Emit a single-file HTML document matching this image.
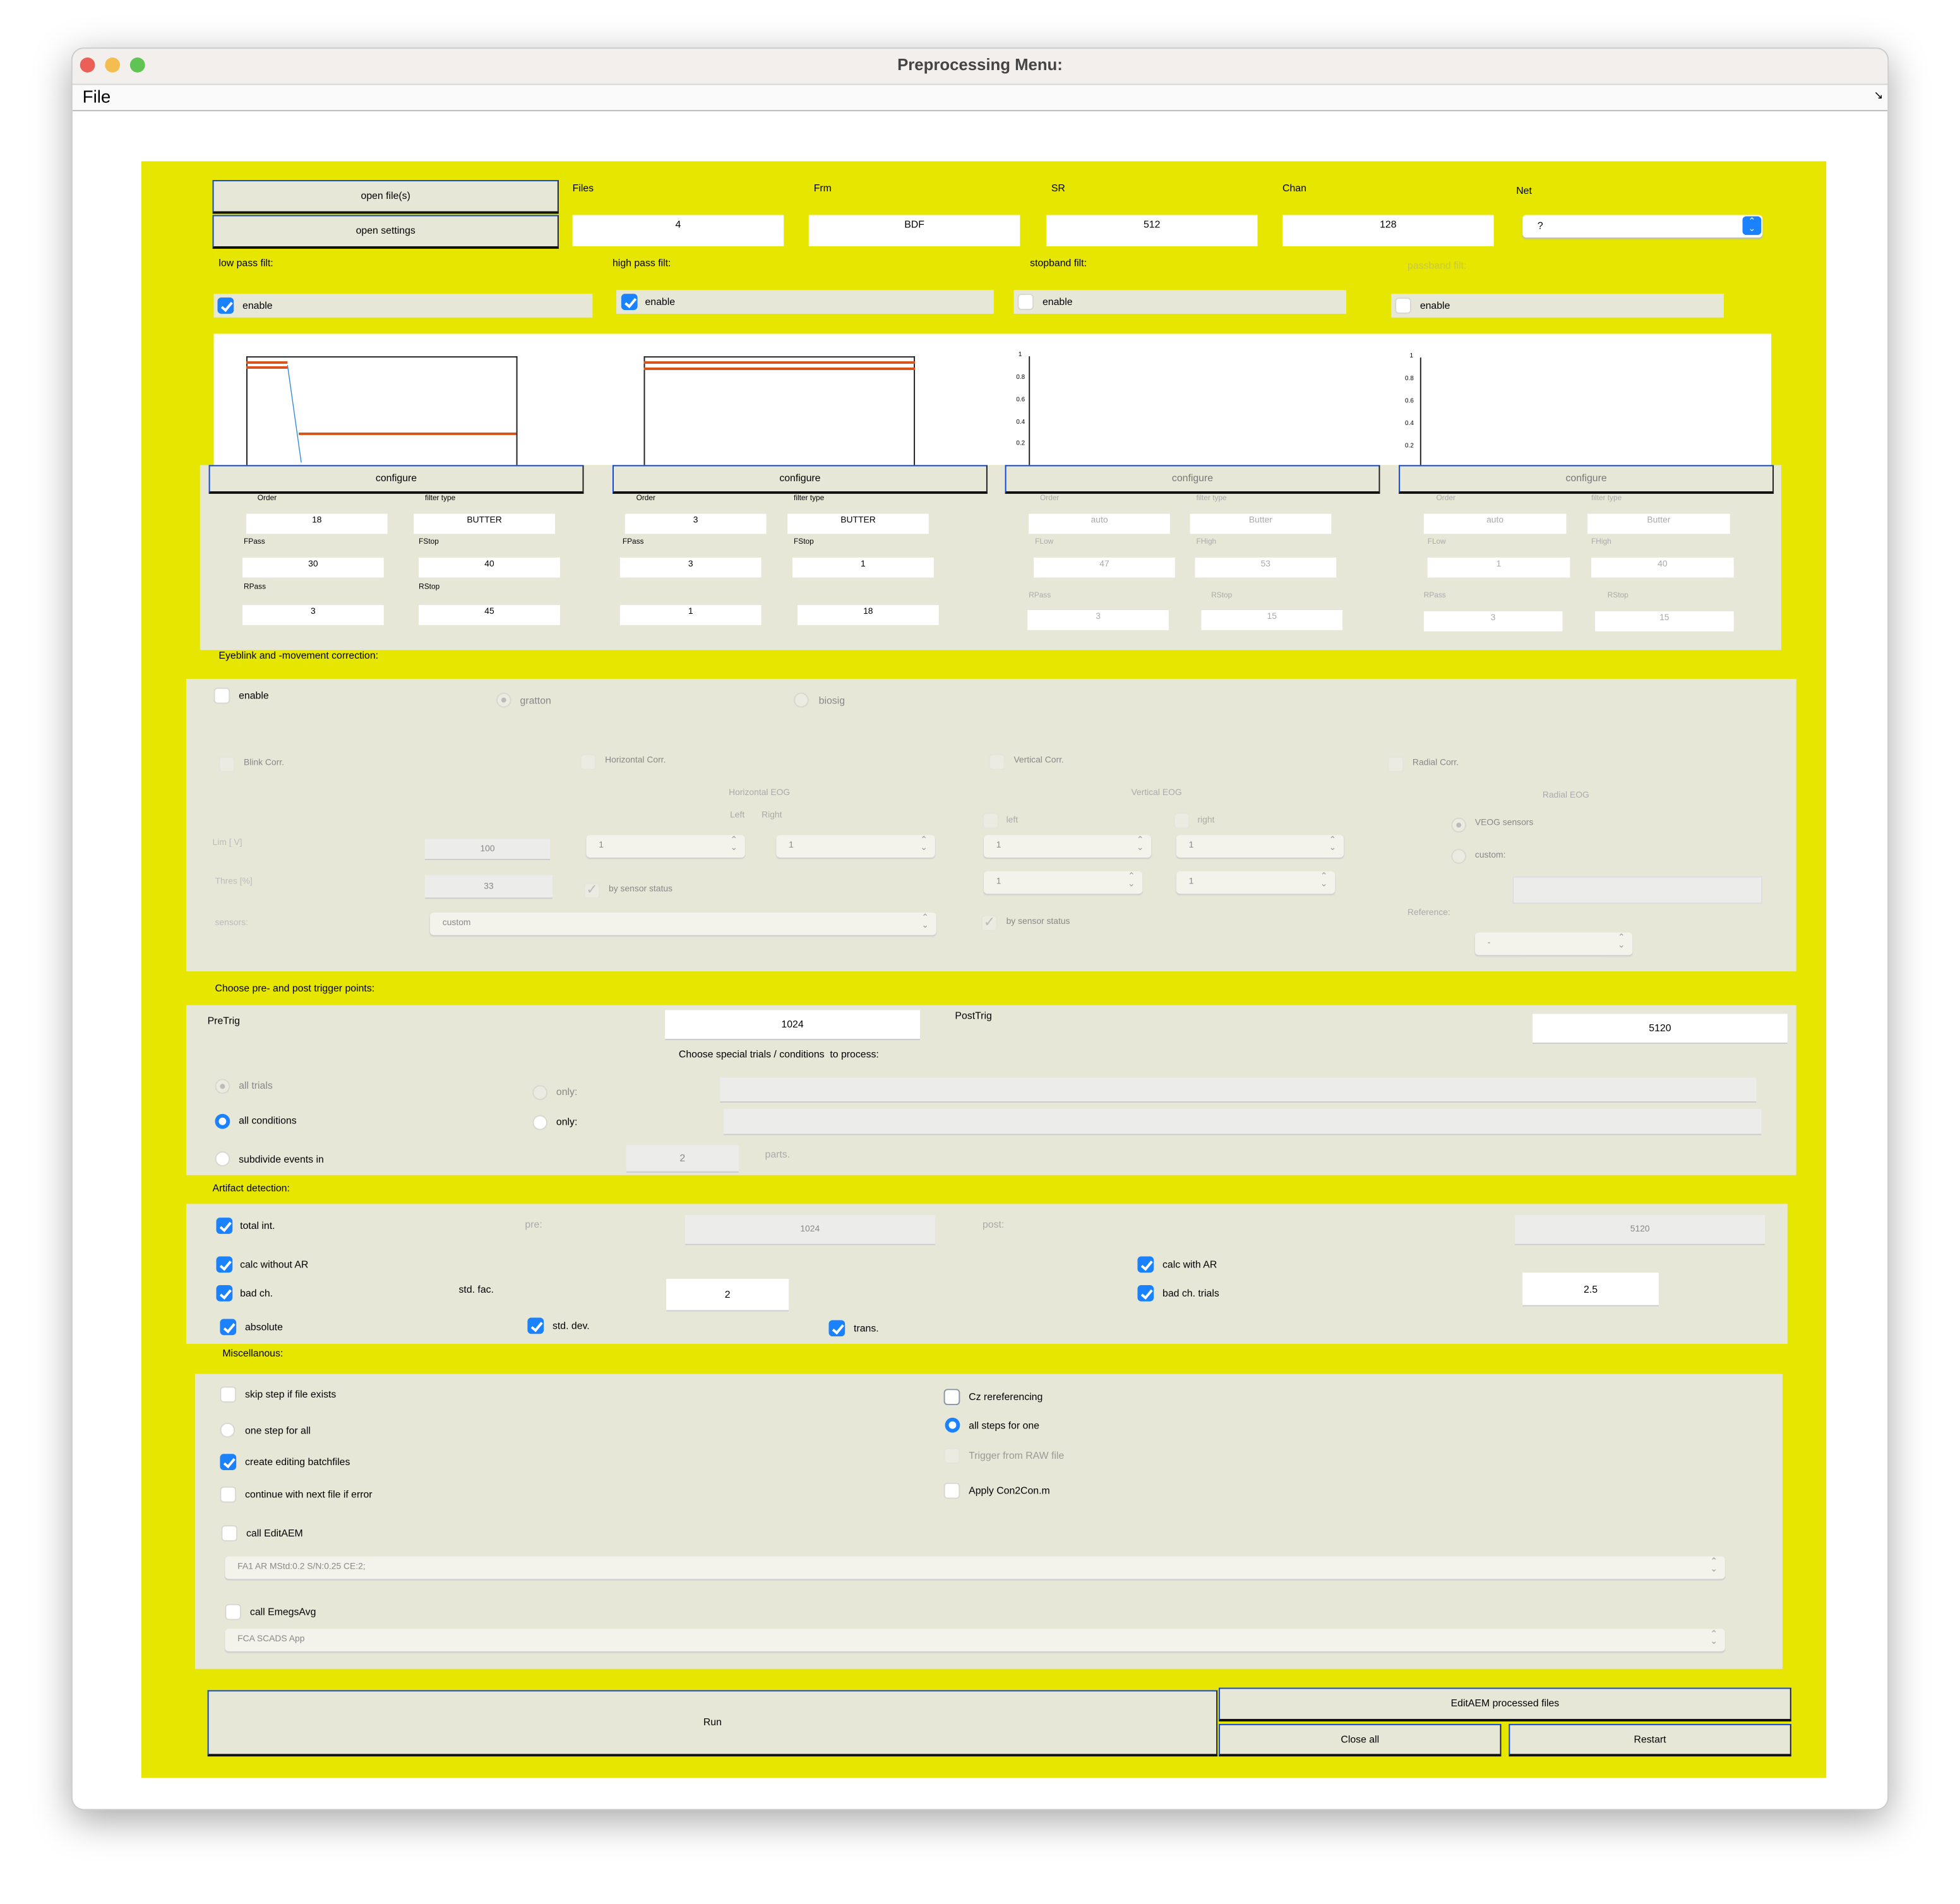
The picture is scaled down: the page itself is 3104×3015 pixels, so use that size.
<!DOCTYPE html>
<html><head><meta charset="utf-8"><style>
html,body{margin:0;padding:0;background:#fff;width:3104px;height:3014px;overflow:hidden}
#r{position:absolute;left:0;top:0;width:1568px;height:1523px;transform:scale(1.97959);transform-origin:0 0;font-family:"Liberation Sans Narrow","Liberation Sans",sans-serif;font-size:8px;color:#000}
#r div{position:absolute;box-sizing:border-box}
.y{background:#e6e600}
.p{background:#e7e7d8}
.w{background:#fff}
.in{background:#fff;text-align:center;font-size:7px;line-height:12px}
.g{color:#aaa}
.btn{background:#e7e7d8;border-top:1.5px solid #1147d8;border-left:1.5px solid #1147d8;border-right:1.5px solid #222;border-bottom:2px solid #111;text-align:center}
.cb{width:13px;height:13px;border-radius:3px;background:#fff;border:1px solid #d8d8d0}
.cb.on{background:#1a82ff;border:none}
.cb.on:after{content:"";position:absolute;left:4.5px;top:1.5px;width:3px;height:7px;border-right:2px solid #fff;border-bottom:2px solid #fff;transform:rotate(40deg)}
.cb.d{background:#ecebe1;border:1px solid #e4e4da}
.rb{width:12px;height:12px;border-radius:50%;background:#fff;border:1px solid #d8d8d0}
.rb.on{border:3.5px solid #1a82ff}
.rb.d{background:#ecebe1}
.rb.d:after{content:"";position:absolute;left:3px;top:3px;width:4px;height:4px;border-radius:50%;background:#bbb}
.sp{background:#f3f3ec;border-radius:3px;box-shadow:0 1px 1px #ccc;font-size:7px;color:#888;padding-left:10px;line-height:17px}
.sp:after{content:"⌃\A⌄";white-space:pre;position:absolute;right:6px;top:0;font-size:7px;line-height:6px;padding-top:2px;color:#999}
.dis{background:#ececeb;border-bottom:1px solid #ccc;text-align:center;color:#888;font-size:7px}
</style></head><body><div id="r">
<!-- window -->
<div style="left:57px;top:38px;width:1454px;height:1410px;border-radius:10px;background:#fff;box-shadow:0 8px 30px rgba(0,0,0,.35);border:1px solid #ccc;overflow:hidden">
 <div style="left:0;top:0;width:1454px;height:29px;background:#f3efec;border-bottom:1px solid #d6d3d0"></div>
 <div style="left:0;top:29px;width:1454px;height:21px;background:#fafafa;border-bottom:1px solid #bbb"></div>
</div>
<div style="left:64px;top:46px;width:12px;height:12px;border-radius:50%;background:#ec5f57"></div>
<div style="left:84px;top:46px;width:12px;height:12px;border-radius:50%;background:#f4bd4f"></div>
<div style="left:104px;top:46px;width:12px;height:12px;border-radius:50%;background:#5fc454"></div>
<div style="left:600px;top:44px;width:368px;text-align:center;font-family:'Liberation Sans',sans-serif;font-weight:bold;font-size:13px;color:#444">Preprocessing Menu:</div>
<div style="left:66px;top:69px;font-family:'Liberation Sans',sans-serif;font-size:14px">File</div>
<div style="left:1499px;top:71px;font-size:9px">↘</div>

<!-- yellow -->
<div class="y" style="left:113px;top:129px;width:1348px;height:1293px"></div>

<!-- top -->
<div class="btn" style="left:170px;top:144px;width:277px;height:27px;line-height:24px">open file(s)</div>
<div class="btn" style="left:170px;top:172px;width:277px;height:27px;line-height:24px">open settings</div>
<div style="left:458px;top:146px">Files</div>
<div style="left:651px;top:146px">Frm</div>
<div style="left:841px;top:146px">SR</div>
<div style="left:1026px;top:146px">Chan</div>
<div style="left:1213px;top:148px">Net</div>
<div class="in" style="left:458px;top:172px;width:169px;height:25px;line-height:16px;font-size:8px">4</div>
<div class="in" style="left:647px;top:172px;width:169px;height:25px;line-height:16px;font-size:8px">BDF</div>
<div class="in" style="left:837px;top:172px;width:169px;height:25px;line-height:16px;font-size:8px">512</div>
<div class="in" style="left:1026px;top:172px;width:169px;height:25px;line-height:16px;font-size:8px">128</div>
<div style="left:1218px;top:172px;width:192px;height:18px;background:#fff;border-radius:3px;box-shadow:0 1px 1px #bbb;padding-left:12px;line-height:18px">?</div>
<div style="left:1394px;top:173px;width:15px;height:15px;background:#1a82ff;border-radius:3px;color:#fff;font-size:7px;line-height:6px;text-align:center;padding-top:2px">⌃<br>⌄</div>
<div style="left:175px;top:206px">low pass filt:</div>
<div style="left:490px;top:206px">high pass filt:</div>
<div style="left:824px;top:206px">stopband filt:</div>
<div style="left:1126px;top:208px;color:#c8c840">passband filt:</div>
<div class="p" style="left:171px;top:235px;width:303px;height:19px"></div>
<div class="p" style="left:493px;top:232px;width:302px;height:19px"></div>
<div class="p" style="left:811px;top:232px;width:266px;height:19px"></div>
<div class="p" style="left:1113px;top:235px;width:266px;height:19px"></div>
<div class="cb on" style="left:174px;top:238px"></div><div style="left:194px;top:240px">enable</div>
<div class="cb on" style="left:497px;top:235px"></div><div style="left:516px;top:237px">enable</div>
<div class="cb" style="left:814px;top:235px"></div><div style="left:834px;top:237px">enable</div>
<div class="cb" style="left:1116px;top:238px"></div><div style="left:1136px;top:240px">enable</div>

<!-- plots -->
<div class="w" style="left:171px;top:267px;width:1246px;height:105px"></div>
<div style="left:197px;top:285px;width:217px;height:87px;border:1px solid #222;border-bottom:none"></div>
<div style="left:197px;top:289px;width:33px;height:2px;background:#d95319"></div>
<div style="left:197px;top:293px;width:33px;height:2px;background:#d95319"></div>
<div style="left:239px;top:346px;width:174px;height:2px;background:#d95319"></div>
<svg style="position:absolute;left:197px;top:285px" width="60" height="90"><path d="M33 7 L44 85" stroke="#2e8ad8" stroke-width="0.7" fill="none"/></svg>
<div style="left:515px;top:285px;width:217px;height:87px;border:1px solid #222;border-bottom:none"></div>
<div style="left:515px;top:289px;width:217px;height:2px;background:#d95319"></div>
<div style="left:515px;top:294px;width:217px;height:2px;background:#d95319"></div>
<div style="left:823px;top:285px;width:1px;height:87px;background:#222"></div>
<div style="left:1136px;top:286px;width:1px;height:86px;background:#222"></div>
<div style="left:812px;top:281px;font-size:5px;line-height:6px;font-family:'Liberation Sans'">&nbsp;&nbsp;1</div>
<div style="left:813px;top:299px;font-size:5px;font-family:'Liberation Sans'">0.8</div>
<div style="left:813px;top:317px;font-size:5px;font-family:'Liberation Sans'">0.6</div>
<div style="left:813px;top:335px;font-size:5px;font-family:'Liberation Sans'">0.4</div>
<div style="left:813px;top:352px;font-size:5px;font-family:'Liberation Sans'">0.2</div>
<div style="left:1125px;top:282px;font-size:5px;font-family:'Liberation Sans'">&nbsp;&nbsp;1</div>
<div style="left:1124px;top:300px;font-size:5px;font-family:'Liberation Sans'">0.8</div>
<div style="left:1124px;top:318px;font-size:5px;font-family:'Liberation Sans'">0.6</div>
<div style="left:1124px;top:336px;font-size:5px;font-family:'Liberation Sans'">0.4</div>
<div style="left:1124px;top:354px;font-size:5px;font-family:'Liberation Sans'">0.2</div>

<!-- filter params panel -->
<div class="p" style="left:160px;top:372px;width:1265px;height:148px"></div>
<div class="btn" style="left:167px;top:372px;width:300px;height:23px;line-height:20px">configure</div>
<div class="btn" style="left:490px;top:372px;width:300px;height:23px;line-height:20px">configure</div>
<div class="btn g" style="left:804px;top:372px;width:300px;height:23px;line-height:20px;color:#777">configure</div>
<div class="btn g" style="left:1119px;top:372px;width:300px;height:23px;line-height:20px;color:#777">configure</div>
<div style="left:206px;top:396px;font-size:6px">Order</div><div style="left:340px;top:396px;font-size:6px">filter type</div>
<div class="in" style="left:197px;top:411px;width:113px;height:16px">18</div><div class="in" style="left:331px;top:411px;width:113px;height:16px">BUTTER</div>
<div style="left:195px;top:431px;font-size:6px">FPass</div><div style="left:335px;top:431px;font-size:6px">FStop</div>
<div class="in" style="left:194px;top:446px;width:113px;height:16px">30</div><div class="in" style="left:335px;top:446px;width:113px;height:16px">40</div>
<div style="left:195px;top:467px;font-size:6px">RPass</div><div style="left:335px;top:467px;font-size:6px">RStop</div>
<div class="in" style="left:194px;top:484px;width:113px;height:16px">3</div><div class="in" style="left:335px;top:484px;width:113px;height:16px">45</div>

<div style="left:509px;top:396px;font-size:6px">Order</div><div style="left:635px;top:396px;font-size:6px">filter type</div>
<div class="in" style="left:500px;top:411px;width:113px;height:16px">3</div><div class="in" style="left:630px;top:411px;width:113px;height:16px">BUTTER</div>
<div style="left:498px;top:431px;font-size:6px">FPass</div><div style="left:635px;top:431px;font-size:6px">FStop</div>
<div class="in" style="left:496px;top:446px;width:113px;height:16px">3</div><div class="in" style="left:634px;top:446px;width:113px;height:16px">1</div>
<div class="in" style="left:496px;top:484px;width:113px;height:16px">1</div><div class="in" style="left:638px;top:484px;width:113px;height:16px">18</div>

<div class="g" style="left:832px;top:396px;font-size:6px">Order</div><div class="g" style="left:957px;top:396px;font-size:6px">filter type</div>
<div class="in g" style="left:823px;top:411px;width:113px;height:16px">auto</div><div class="in g" style="left:952px;top:411px;width:113px;height:16px">Butter</div>
<div class="g" style="left:828px;top:431px;font-size:6px">FLow</div><div class="g" style="left:957px;top:431px;font-size:6px">FHigh</div>
<div class="in g" style="left:827px;top:446px;width:113px;height:16px">47</div><div class="in g" style="left:956px;top:446px;width:113px;height:16px">53</div>
<div class="g" style="left:823px;top:474px;font-size:6px">RPass</div><div class="g" style="left:969px;top:474px;font-size:6px">RStop</div>
<div class="in g" style="left:822px;top:488px;width:113px;height:16px">3</div><div class="in g" style="left:961px;top:488px;width:113px;height:16px">15</div>

<div class="g" style="left:1149px;top:396px;font-size:6px">Order</div><div class="g" style="left:1273px;top:396px;font-size:6px">filter type</div>
<div class="in g" style="left:1139px;top:411px;width:114px;height:16px">auto</div><div class="in g" style="left:1270px;top:411px;width:114px;height:16px">Butter</div>
<div class="g" style="left:1142px;top:431px;font-size:6px">FLow</div><div class="g" style="left:1273px;top:431px;font-size:6px">FHigh</div>
<div class="in g" style="left:1142px;top:446px;width:114px;height:16px">1</div><div class="in g" style="left:1273px;top:446px;width:114px;height:16px">40</div>
<div class="g" style="left:1139px;top:474px;font-size:6px">RPass</div><div class="g" style="left:1286px;top:474px;font-size:6px">RStop</div>
<div class="in g" style="left:1139px;top:489px;width:111px;height:16px">3</div><div class="in g" style="left:1276px;top:489px;width:111px;height:16px">15</div>

<!-- eyeblink -->
<div style="left:175px;top:520px">Eyeblink and -movement correction:</div>
<div class="p" style="left:149px;top:543px;width:1288px;height:234px"></div>
<div class="cb" style="left:171px;top:550px"></div><div style="left:191px;top:552px">enable</div>
<div class="rb d" style="left:397px;top:554px"></div><div style="left:416px;top:556px;color:#888">gratton</div>
<div class="rb" style="left:635px;top:554px;background:#ecebe1"></div><div style="left:655px;top:556px;color:#888">biosig</div>
<div class="cb d" style="left:175px;top:605px"></div><div style="left:195px;top:607px;color:#888;font-size:7px">Blink Corr.</div>
<div class="cb d" style="left:464px;top:603px"></div><div style="left:484px;top:605px;color:#888;font-size:7px">Horizontal Corr.</div>
<div class="cb d" style="left:791px;top:603px"></div><div style="left:811px;top:605px;color:#888;font-size:7px">Vertical Corr.</div>
<div class="cb d" style="left:1110px;top:605px"></div><div style="left:1130px;top:607px;color:#888;font-size:7px">Radial Corr.</div>
<div class="g" style="left:583px;top:631px;font-size:7px">Horizontal EOG</div>
<div class="g" style="left:584px;top:649px;font-size:7px">Left &nbsp;&nbsp;&nbsp;&nbsp;&nbsp;&nbsp;Right</div>
<div class="g" style="left:905px;top:631px;font-size:7px">Vertical EOG</div>
<div class="g" style="left:1234px;top:633px;font-size:7px">Radial EOG</div>
<div class="cb d" style="left:786px;top:650px"></div><div class="g" style="left:805px;top:653px;font-size:7px">left</div>
<div class="cb d" style="left:939px;top:650px"></div><div class="g" style="left:958px;top:653px;font-size:7px">right</div>
<div class="rb d" style="left:1161px;top:654px"></div><div style="left:1180px;top:655px;font-size:7px;color:#888">VEOG sensors</div>
<div class="rb" style="left:1161px;top:679px;background:#ecebe1"></div><div style="left:1180px;top:681px;font-size:7px;color:#888">custom:</div>
<div class="g" style="left:170px;top:671px;font-size:7px;color:#bbb">Lim [ V]</div>
<div class="g" style="left:172px;top:702px;font-size:7px;color:#bbb">Thres [%]</div>
<div class="g" style="left:172px;top:735px;font-size:7px;color:#bbb">sensors:</div>
<div class="dis" style="left:340px;top:671px;width:100px;height:17px;line-height:17px">100</div>
<div class="dis" style="left:340px;top:700px;width:102px;height:19px;line-height:19px">33</div>
<div class="sp" style="left:469px;top:668px;width:127px;height:18px">1</div>
<div class="sp" style="left:621px;top:668px;width:127px;height:18px">1</div>
<div class="sp" style="left:787px;top:668px;width:134px;height:18px">1</div>
<div class="sp" style="left:941px;top:668px;width:134px;height:18px">1</div>
<div class="sp" style="left:787px;top:697px;width:127px;height:18px">1</div>
<div class="sp" style="left:941px;top:697px;width:127px;height:18px">1</div>
<div class="cb d" style="left:467px;top:706px;color:#bbb;font-size:11px;line-height:11px;text-align:center">✓</div><div class="g" style="left:487px;top:708px;font-size:7px;color:#888">by sensor status</div>
<div class="cb d" style="left:785px;top:732px;color:#bbb;font-size:11px;line-height:11px;text-align:center">✓</div><div class="g" style="left:805px;top:734px;font-size:7px;color:#888">by sensor status</div>
<div class="sp" style="left:344px;top:730px;width:405px;height:18px">custom</div>
<div style="left:1210px;top:701px;width:200px;height:22px;background:#ececeb;border:1px solid #ddd"></div>
<div class="g" style="left:1126px;top:727px;font-size:7px">Reference:</div>
<div class="sp" style="left:1180px;top:746px;width:126px;height:18px">-</div>

<!-- trigger -->
<div style="left:172px;top:786px">Choose pre- and post trigger points:</div>
<div class="p" style="left:149px;top:804px;width:1288px;height:136px"></div>
<div style="left:166px;top:812px">PreTrig</div>
<div class="w" style="left:532px;top:808px;width:204px;height:24px;border-bottom:1px solid #ccc;text-align:center;line-height:24px">1024</div>
<div style="left:764px;top:808px">PostTrig</div>
<div class="w" style="left:1226px;top:811px;width:204px;height:24px;border-bottom:1px solid #ccc;text-align:center;line-height:24px">5120</div>
<div style="left:543px;top:839px">Choose special trials / conditions &nbsp;to process:</div>
<div class="rb d" style="left:172px;top:863px"></div><div style="left:191px;top:864px;color:#888">all trials</div>
<div class="rb on" style="left:172px;top:891px"></div><div style="left:191px;top:892px">all conditions</div>
<div class="rb" style="left:172px;top:921px"></div><div style="left:191px;top:923px">subdivide events in</div>
<div class="rb" style="left:426px;top:868px;background:#ecebe1"></div><div style="left:445px;top:869px;color:#888">only:</div>
<div class="rb" style="left:426px;top:892px"></div><div style="left:445px;top:893px">only:</div>
<div style="left:576px;top:862px;width:829px;height:20px;background:#ececeb;border-bottom:1px solid #ccc"></div>
<div style="left:579px;top:887px;width:830px;height:21px;background:#ececeb;border-bottom:1px solid #ccc"></div>
<div class="dis" style="left:501px;top:916px;width:90px;height:22px;line-height:22px;font-size:8px">2</div>
<div class="g" style="left:612px;top:919px">parts.</div>

<!-- artifact -->
<div style="left:170px;top:946px">Artifact detection:</div>
<div class="p" style="left:149px;top:963px;width:1281px;height:112px"></div>
<div class="cb on" style="left:173px;top:974px"></div><div style="left:192px;top:976px">total int.</div>
<div class="g" style="left:420px;top:975px">pre:</div>
<div class="dis" style="left:548px;top:972px;width:200px;height:24px;line-height:24px">1024</div>
<div class="g" style="left:786px;top:975px">post:</div>
<div class="dis" style="left:1212px;top:972px;width:200px;height:24px;line-height:24px">5120</div>
<div class="cb on" style="left:173px;top:1005px"></div><div style="left:192px;top:1007px">calc without AR</div>
<div class="cb on" style="left:910px;top:1005px"></div><div style="left:930px;top:1007px">calc with AR</div>
<div class="cb on" style="left:173px;top:1028px"></div><div style="left:192px;top:1030px">bad ch.</div>
<div style="left:367px;top:1027px">std. fac.</div>
<div class="w" style="left:533px;top:1023px;width:98px;height:26px;border-bottom:1px solid #ccc;text-align:center;line-height:26px">2</div>
<div class="cb on" style="left:910px;top:1028px"></div><div style="left:930px;top:1030px">bad ch. trials</div>
<div class="w" style="left:1218px;top:1018px;width:109px;height:27px;border-bottom:1px solid #ccc;text-align:center;line-height:27px">2.5</div>
<div class="cb on" style="left:176px;top:1055px"></div><div style="left:196px;top:1057px">absolute</div>
<div class="cb on" style="left:422px;top:1054px"></div><div style="left:442px;top:1056px">std. dev.</div>
<div class="cb on" style="left:663px;top:1056px"></div><div style="left:683px;top:1058px">trans.</div>

<!-- misc -->
<div style="left:178px;top:1078px">Miscellanous:</div>
<div class="p" style="left:156px;top:1099px;width:1270px;height:236px"></div>
<div class="cb" style="left:176px;top:1109px"></div><div style="left:196px;top:1111px">skip step if file exists</div>
<div class="rb" style="left:176px;top:1138px"></div><div style="left:196px;top:1140px">one step for all</div>
<div class="cb on" style="left:176px;top:1163px"></div><div style="left:196px;top:1165px">create editing batchfiles</div>
<div class="cb" style="left:176px;top:1189px"></div><div style="left:196px;top:1191px">continue with next file if error</div>
<div class="cb" style="left:177px;top:1220px"></div><div style="left:197px;top:1222px">call EditAEM</div>
<div class="cb" style="left:755px;top:1111px;border:1.5px solid #8a96a8"></div><div style="left:775px;top:1113px">Cz rereferencing</div>
<div class="rb on" style="left:756px;top:1134px"></div><div style="left:775px;top:1136px">all steps for one</div>
<div class="cb d" style="left:755px;top:1158px"></div><div style="left:775px;top:1160px;color:#999">Trigger from RAW file</div>
<div class="cb" style="left:755px;top:1186px"></div><div style="left:775px;top:1188px">Apply Con2Con.m</div>
<div class="sp" style="left:180px;top:1245px;width:1200px;height:18px;line-height:18px">FA1 AR MStd:0.2 S/N:0.25 CE:2;</div>
<div class="cb" style="left:180px;top:1283px"></div><div style="left:200px;top:1285px">call EmegsAvg</div>
<div class="sp" style="left:180px;top:1303px;width:1200px;height:18px;line-height:18px">FCA SCADS App</div>

<!-- bottom buttons -->
<div class="btn" style="left:166px;top:1352px;width:808px;height:53px;line-height:50px">Run</div>
<div class="btn" style="left:975px;top:1350px;width:458px;height:27px;line-height:24px">EditAEM processed files</div>
<div class="btn" style="left:975px;top:1379px;width:226px;height:26px;line-height:23px">Close all</div>
<div class="btn" style="left:1207px;top:1379px;width:226px;height:26px;line-height:23px">Restart</div>
</div></body></html>
